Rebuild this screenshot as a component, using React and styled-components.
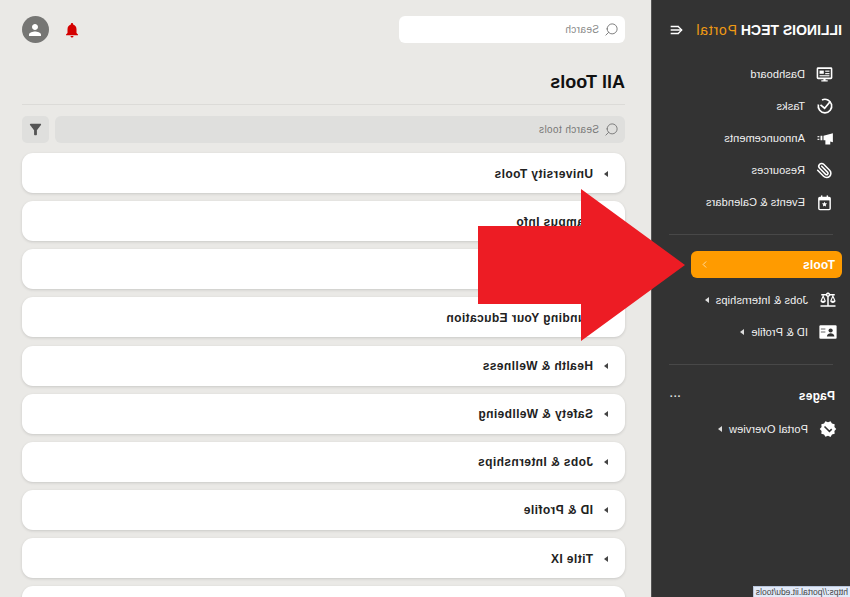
import React from "react";
import styled, { createGlobalStyle } from "styled-components";
import { Search, Paperclip, ChevronRight } from "lucide-react";
import {
  MdBalance,
  MdVerified,
  MdNotifications,
  MdPerson,
  MdFilterAlt,
} from "react-icons/md";

const GlobalStyle = createGlobalStyle`
  html, body {
    margin: 0;
    padding: 0;
    background: #eae9e6;
    font-family: "Liberation Sans", Arial, sans-serif;
    overflow: hidden;
  }
`;

const DashIcon = () => (
  <svg width="17" height="17" viewBox="0 0 24 24" fill="none">
    <rect x="2" y="3" width="20" height="14.5" rx="1" stroke="#fff" strokeWidth="2.2" />
    <rect x="13" y="6.5" width="6" height="4.5" fill="#fff" />
    <rect x="5" y="6.5" width="6" height="1.6" fill="#fff" />
    <rect x="5" y="10" width="6" height="1.6" fill="#fff" />
    <rect x="5" y="13" width="14" height="1.6" fill="#fff" />
    <path d="M10.5 18h3v2h3v2h-9v-2h3z" fill="#fff" />
  </svg>
);

const TaskIcon = () => (
  <svg width="18" height="18" viewBox="0 0 24 24" fill="none" stroke="#fff" strokeWidth="2.2">
    <path d="M16 4 A9 9 0 1 0 20.8 10" />
    <path d="M5 6l7.5 9 5.5-4.5" />
  </svg>
);

const MegaphoneIcon = () => (
  <svg width="18" height="18" viewBox="0 0 24 24" fill="#fff">
    <path d="M1.5 5.5L14 9v6h-2.5v5.5H5v-4l-3.500 1z" />
    <rect x="15.500" y="9" width="2.500" height="6" />
    <rect x="19.500" y="9.500" width="2.500" height="1.500" />
    <rect x="19.500" y="13" width="2.500" height="1.500" />
  </svg>
);

const CalendarStarIcon = () => (
  <svg width="17" height="17" viewBox="0 0 24 24" fill="none">
    <rect x="4" y="5" width="16" height="17" rx="1.5" stroke="#fff" strokeWidth="2" />
    <rect x="4" y="5" width="16" height="4" fill="#fff" />
    <rect x="7" y="2" width="2" height="4" fill="#fff" />
    <rect x="15" y="2" width="2" height="4" fill="#fff" />
    <path d="M12 10.800l1.100 2.300 2.500.3-1.800 1.800.4 2.500-2.200-1.200-2.200 1.200.4-2.500-1.800-1.800 2.500-.3z" fill="#fff" />
  </svg>
);

const CardPersonIcon = () => (
  <svg width="18" height="16" viewBox="0 0 24 20">
    <rect x="0.5" y="1" width="23" height="18" rx="1.500" fill="#fff" />
    <circle cx="8.500" cy="8" r="2.800" fill="#333" />
    <path d="M3.500 16c0-3 3-4.400 5-4.400s5 1.400 5 4.400z" fill="#333" />
    <rect x="15.500" y="5" width="6" height="2" fill="#999" />
    <rect x="15.500" y="9" width="6" height="2" fill="#999" />
  </svg>
);

const MenuOpenIcon = () => (
  <svg width="15" height="14" viewBox="0 0 24 24" fill="none" stroke="#fff" strokeWidth="2.2">
    <path d="M9 6l-6 6 6 6" />
    <path d="M3 12h19M8 6h14M8 18h14" />
  </svg>
);

const topLinks = [
  { label: "Dashboard", icon: <DashIcon /> },
  { label: "Tasks", icon: <TaskIcon /> },
  { label: "Announcements", icon: <MegaphoneIcon /> },
  { label: "Resources", icon: <Paperclip size={17} color="#fff" strokeWidth={2.2} /> },
  { label: "Events & Calendars", icon: <CalendarStarIcon /> },
];

const toolLinks = [
  { label: "Jobs & Internships", icon: <MdBalance size={18} color="#fff" /> },
  { label: "ID & Profile", icon: <CardPersonIcon /> },
];

// the third label sits under the arrow, the last card runs off the page
const categories = [
  "University Tools",
  "Campus Info",
  "Student Life",
  "Funding Your Education",
  "Health & Wellness",
  "Safety & Wellbeing",
  "Jobs & Internships",
  "ID & Profile",
  "Title IX",
  "",
];

export default function App() {
  return (
    <>
      <GlobalStyle />
      <Stage>
        <Sidebar>
          <Brand>
            <BrandText>
              ILLINOIS TECH <BrandAccent>Portal</BrandAccent>
            </BrandText>
            <MenuOpenIcon />
          </Brand>
          <NavList>
            {topLinks.map((item) => (
              <NavRow key={item.label}>
                <NavIcon>{item.icon}</NavIcon>
                <NavLabel>{item.label}</NavLabel>
              </NavRow>
            ))}
          </NavList>
          <Divider />
          <ActivePill>
            <span>Tools</span>
            <ChevronRight size={11} color="#ffe0ad" strokeWidth={2} />
          </ActivePill>
          <NavList $inset>
            {toolLinks.map((item) => (
              <NavRow key={item.label} $wide>
                <NavIcon $wide>{item.icon}</NavIcon>
                <NavLabel>{item.label}</NavLabel>
                <SideCaret />
              </NavRow>
            ))}
          </NavList>
          <Divider />
          <SectionHead>
            <span>Pages</span>
            <Dots>···</Dots>
          </SectionHead>
          <NavRow $wide>
            <NavIcon $wide>
              <MdVerified size={18} color="#fff" />
            </NavIcon>
            <NavLabel>Portal Overview</NavLabel>
            <SideCaret />
          </NavRow>
          <StatusTip>https://portal.iit.edu/tools</StatusTip>
        </Sidebar>
        <Main>
          <TopBar>
            <TopSearch>
              <Search size={15} color="#777" strokeWidth={1.5} />
              <span>Search</span>
            </TopSearch>
            <TopActions>
              <MdNotifications size={18} color="#d40000" />
              <Avatar>
                <MdPerson size={18} color="#fff" />
              </Avatar>
            </TopActions>
          </TopBar>
          <PageTitle>All Tools</PageTitle>
          <FilterRow>
            <ToolSearch>
              <Search size={15} color="#777" strokeWidth={1.5} />
              <span>Search tools</span>
            </ToolSearch>
            <FilterButton>
              <MdFilterAlt size={17} color="#555" />
            </FilterButton>
          </FilterRow>
          <CardList>
            {categories.map((name, i) => (
              <Card key={i}>
                {name && <CardCaret />}
                {name && <CardName>{name}</CardName>}
              </Card>
            ))}
          </CardList>
        </Main>
        <BigArrow viewBox="0 0 207 152" width="207" height="152">
          <polygon points="0,76 104,0 104,37 207,37 207,115 104,115 104,152" fill="#ed1c24" />
        </BigArrow>
      </Stage>
    </>
  );
}

// the whole page is a mirror image of the portal
const Stage = styled.div`
  position: relative;
  display: flex;
  width: 850px;
  height: 597px;
  overflow: hidden;
  transform: scaleX(-1);
  background: #eae9e6;
`;

const Sidebar = styled.aside`
  position: relative;
  box-sizing: border-box;
  width: 199px;
  flex: none;
  background: #333333;
  color: #fff;
  border-right: 1px solid #555;
`;

const Brand = styled.div`
  display: flex;
  align-items: center;
  justify-content: space-between;
  height: 58px;
  padding: 2px 17px 0 8px;
  box-sizing: border-box;
`;

const BrandText = styled.div`
  font-size: 14px;
  font-weight: 700;
  white-space: nowrap;
`;

const BrandAccent = styled.span`
  font-weight: 400;
  letter-spacing: 0.8px;
  color: #f09a14;
`;

const NavList = styled.nav`
  display: flex;
  flex-direction: column;
  margin-top: ${(props) => (props.$inset ? "6px" : "0")};
`;

const NavRow = styled.div`
  display: flex;
  align-items: center;
  height: 32px;
  padding-left: ${(props) => (props.$wide ? "13px" : "15px")};
`;

const NavIcon = styled.span`
  display: flex;
  align-items: center;
  justify-content: center;
  width: ${(props) => (props.$wide ? "18px" : "20px")};
  margin-right: ${(props) => (props.$wide ? "11px" : "10px")};
`;

const NavLabel = styled.span`
  font-size: 11px;
  letter-spacing: 0.1px;
  color: #f2f2f2;
  white-space: nowrap;
`;

const SideCaret = styled.span`
  width: 0;
  height: 0;
  margin-left: 7px;
  border-left: 4px solid #ddd;
  border-top: 3px solid transparent;
  border-bottom: 3px solid transparent;
`;

const Divider = styled.div`
  height: 1px;
  margin: 16px 17px;
  background: #484848;
`;

const ActivePill = styled.div`
  display: flex;
  align-items: center;
  justify-content: space-between;
  box-sizing: border-box;
  width: 151px;
  height: 27px;
  margin-left: 8px;
  padding: 0 8px 0 7px;
  border-radius: 6px;
  background: #ff9b00;
  font-size: 12px;
  font-weight: 700;
  letter-spacing: 0.2px;
  color: #fff;
`;

const SectionHead = styled.div`
  display: flex;
  align-items: center;
  justify-content: space-between;
  height: 30px;
  margin-bottom: 2px;
  padding: 0 17px 0 15px;
  font-size: 12px;
  font-weight: 700;
  letter-spacing: 0.2px;
`;

const Dots = styled.span`
  font-size: 11px;
  color: #ddd;
`;

const StatusTip = styled.div`
  position: absolute;
  left: 0;
  bottom: 0;
  box-sizing: border-box;
  width: 97px;
  height: 11px;
  padding-left: 2px;
  background: #e2eaf8;
  border: 1px solid #b9c6dc;
  border-bottom: 0;
  border-left: 0;
  font-size: 8.5px;
  line-height: 10px;
  color: #444;
  white-space: nowrap;
`;

const Main = styled.main`
  flex: 1;
  min-width: 0;
  box-sizing: border-box;
  padding: 16px 22px 0 26px;
`;

const TopBar = styled.div`
  display: flex;
  align-items: center;
  justify-content: space-between;
  height: 27px;
`;

const TopSearch = styled.div`
  display: flex;
  align-items: center;
  gap: 5px;
  box-sizing: border-box;
  width: 226px;
  height: 27px;
  padding-left: 6px;
  border-radius: 6px;
  background: #fff;
  font-size: 10px;
  letter-spacing: 0.4px;
  color: #888;
`;

const TopActions = styled.div`
  display: flex;
  align-items: center;
  gap: 14px;
`;

const Avatar = styled.div`
  display: flex;
  align-items: center;
  justify-content: center;
  width: 27px;
  height: 27px;
  border-radius: 50%;
  background: #767674;
`;

const PageTitle = styled.h1`
  margin: 0;
  height: 33px;
  padding-top: 28px;
  font-size: 18px;
  line-height: 22px;
  font-weight: 700;
  color: #111;
  border-bottom: 1px solid #dcdbd8;
`;

const FilterRow = styled.div`
  display: flex;
  gap: 6px;
  margin-top: 11px;
`;

const ToolSearch = styled.div`
  display: flex;
  flex: 1;
  align-items: center;
  gap: 5px;
  height: 27px;
  padding-left: 6px;
  border-radius: 6px;
  background: #dfdfdd;
  font-size: 10px;
  letter-spacing: 0.4px;
  color: #777;
`;

const FilterButton = styled.div`
  display: flex;
  align-items: center;
  justify-content: center;
  width: 27px;
  height: 27px;
  border-radius: 5px;
  background: #dfdfdd;
`;

const CardList = styled.div`
  display: flex;
  flex-direction: column;
  gap: 8.13px;
  margin-top: 10px;
`;

const Card = styled.div`
  display: flex;
  flex: none;
  align-items: center;
  box-sizing: border-box;
  height: 40px;
  padding: 1px 0 0 17px;
  border-radius: 11px;
  background: #fff;
  box-shadow: 0 1px 3px rgba(0, 0, 0, 0.14);
`;

const CardCaret = styled.span`
  width: 0;
  height: 0;
  margin-right: 11px;
  border-left: 4px solid #444;
  border-top: 3px solid transparent;
  border-bottom: 3px solid transparent;
`;

const CardName = styled.span`
  font-size: 12px;
  font-weight: 700;
  letter-spacing: 0.4px;
  color: #222;
`;

const BigArrow = styled.svg`
  position: absolute;
  left: 165px;
  top: 189px;
`;
